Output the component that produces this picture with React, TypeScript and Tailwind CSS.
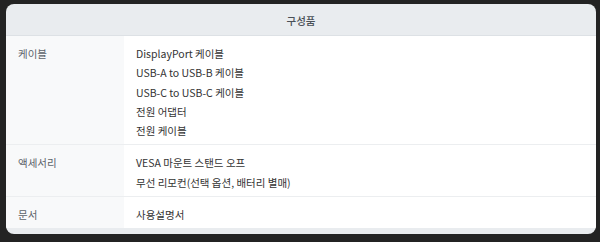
import * as React from "react";

const rows = [
  {
    label: "케이블",
    items: [
      "DisplayPort 케이블",
      "USB-A to USB-B 케이블",
      "USB-C to USB-C 케이블",
      "전원 어댑터",
      "전원 케이블",
    ],
  },
  {
    label: "액세서리",
    items: ["VESA 마운트 스탠드 오프", "무선 리모컨(선택 옵션, 배터리 별매)"],
  },
  {
    label: "문서",
    items: ["사용설명서"],
  },
];

export default function App() {
  return (
    <div
      className="w-[600px] h-[242px] bg-[#232323] pt-[4px] pl-[6px] pr-[4px] pb-[8px]"
      style={{ fontFamily: '"Noto Sans CJK KR", "Noto Sans", sans-serif' }}
    >
      <div className="h-[230px] bg-[#e9ecef] rounded-lg overflow-hidden flex flex-col">
        <div className="h-[32px] pt-[2px] flex items-center justify-center border-b border-[#dde1e5] text-[10.5px] font-medium text-[#495057]">
          구성품
        </div>
        <div className="flex flex-col">
          {rows.map((row, i) => (
            <div
              key={row.label}
              className={`flex ${i < rows.length - 1 ? "border-b border-[#eceef0]" : ""}`}
            >
              <div className="w-[118px] shrink-0 bg-[#f8f9fa] px-3 pt-[8px] pb-[4px] text-[10.5px] leading-[19.25px] text-[#5c636a]">
                {row.label}
              </div>
              <div className="flex-1 bg-white px-3 pt-[8px] pb-[4px]">
                {row.items.map((item) => (
                  <div key={item} className="text-[10.5px] leading-[19.25px] text-[#333333]">
                    {item}
                  </div>
                ))}
              </div>
            </div>
          ))}
        </div>
      </div>
    </div>
  );
}
